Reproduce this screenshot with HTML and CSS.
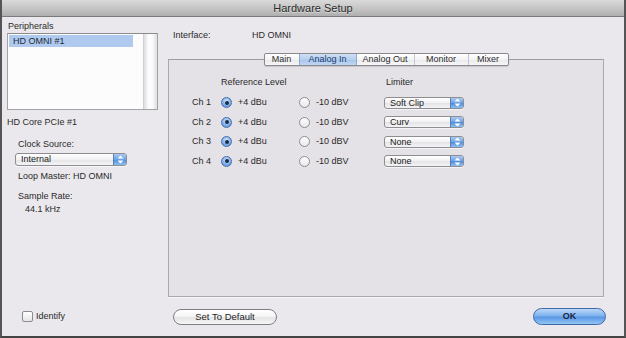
FILE: index.html
```html
<!DOCTYPE html>
<html>
<head>
<meta charset="utf-8">
<link rel="stylesheet" href="styles.css">
</head>
<body>
<div class="window">
  <div class="titlebar">Hardware Setup</div>
  <div class="body">
    <aside class="sidebar">
      <div class="label peripherals">Peripherals</div>
      <div class="listbox">
        <div class="list-items">
          <div class="list-item selected">HD OMNI #1</div>
        </div>
        <div class="scrolltrack"></div>
      </div>
      <div class="label core">HD Core PCIe #1</div>
      <div class="clock">
        <div class="label clock-label">Clock Source:</div>
        <div class="popup clock-popup">
          <span class="popup-text">Internal</span>
          <span class="stepper"><svg width="7" height="9" viewBox="0 0 7 9"><path d="M3.5 0.5 L6.5 3.5 L0.5 3.5 Z M3.5 8.5 L6.5 5.5 L0.5 5.5 Z" fill="#fff"/></svg></span>
        </div>
        <div class="label loop">Loop Master: HD OMNI</div>
        <div class="label rate-label">Sample Rate:</div>
        <div class="label rate">44.1 kHz</div>
      </div>
    </aside>
    <main class="panel">
      <div class="interface"><span class="iface-label">Interface:</span><span>HD OMNI</span></div>
      <div class="tabbox">
        <div class="tabs">
          <div class="tab t-main">Main</div>
          <div class="tab t-in active">Analog In</div>
          <div class="tab t-out">Analog Out</div>
          <div class="tab t-mon">Monitor</div>
          <div class="tab t-mix">Mixer</div>
        </div>
        <div class="grid">
          <div></div>
          <div class="head">Reference Level</div>
          <div></div>
          <div class="head limiter">Limiter</div>

          <div class="ch">Ch 1</div>
          <div class="opt"><span class="radio on"></span>+4 dBu</div>
          <div class="opt"><span class="radio"></span>-10 dBV</div>
          <div class="popup lim"><span class="popup-text">Soft Clip</span><span class="stepper"><svg width="7" height="9" viewBox="0 0 7 9"><path d="M3.5 0.5 L6.5 3.5 L0.5 3.5 Z M3.5 8.5 L6.5 5.5 L0.5 5.5 Z" fill="#fff"/></svg></span></div>

          <div class="ch">Ch 2</div>
          <div class="opt"><span class="radio on"></span>+4 dBu</div>
          <div class="opt"><span class="radio"></span>-10 dBV</div>
          <div class="popup lim"><span class="popup-text">Curv</span><span class="stepper"><svg width="7" height="9" viewBox="0 0 7 9"><path d="M3.5 0.5 L6.5 3.5 L0.5 3.5 Z M3.5 8.5 L6.5 5.5 L0.5 5.5 Z" fill="#fff"/></svg></span></div>

          <div class="ch">Ch 3</div>
          <div class="opt"><span class="radio on"></span>+4 dBu</div>
          <div class="opt"><span class="radio"></span>-10 dBV</div>
          <div class="popup lim"><span class="popup-text">None</span><span class="stepper"><svg width="7" height="9" viewBox="0 0 7 9"><path d="M3.5 0.5 L6.5 3.5 L0.5 3.5 Z M3.5 8.5 L6.5 5.5 L0.5 5.5 Z" fill="#fff"/></svg></span></div>

          <div class="ch">Ch 4</div>
          <div class="opt"><span class="radio on"></span>+4 dBu</div>
          <div class="opt"><span class="radio"></span>-10 dBV</div>
          <div class="popup lim"><span class="popup-text">None</span><span class="stepper"><svg width="7" height="9" viewBox="0 0 7 9"><path d="M3.5 0.5 L6.5 3.5 L0.5 3.5 Z M3.5 8.5 L6.5 5.5 L0.5 5.5 Z" fill="#fff"/></svg></span></div>
        </div>
      </div>
    </main>
  </div>
  <div class="footer">
    <div class="footer-left">
      <span class="checkbox"></span><span class="label">Identify</span>
    </div>
    <div class="footer-right">
      <div class="btn default-btn">Set To Default</div>
      <div class="btn ok-btn">OK</div>
    </div>
  </div>
</div>
</body>
</html>
```

FILE: styles.css
```css
* { box-sizing: border-box; }
html, body { margin: 0; padding: 0; }
body {
  width: 626px;
  height: 338px;
  overflow: hidden;
  background: #ebe8ed;
  font-family: "Liberation Sans", Arial, sans-serif;
  font-size: 9px;
  color: #2a2a2a;
}
.window {
  width: 626px;
  height: 338px;
  border-left: 2px solid #555;
  border-right: 2px solid #555;
  border-bottom: 2px solid #444;
  background: #ebe8ed;
  display: flex;
  flex-direction: column;
}
.titlebar {
  height: 17px;
  line-height: 16px;
  text-align: center;
  font-size: 11px;
  color: #2a2a2a;
  text-shadow: 0 1px 0 rgba(255,255,255,0.5);
  background: linear-gradient(#dadada, #c2c2c2 60%, #afafaf);
  border-bottom: 1px solid #7a7a7a;
}
.body {
  display: flex;
  flex: 1;
}
.label { line-height: 11px; white-space: nowrap; }

/* Sidebar */
.sidebar {
  width: 166px;
  padding-left: 5px;
  display: flex;
  flex-direction: column;
}
.peripherals { margin-top: 4px; padding-left: 1px; }
.listbox {
  margin-top: 1px;
  width: 151px;
  height: 77px;
  border: 1px solid #a3a3a6;
  border-top-color: #8c8c8f;
  background: #fcfcfd;
  display: flex;
}
.list-items { flex: 1; padding: 1px 0 0 1px; }
.list-item {
  height: 12px;
  line-height: 12px;
  padding-left: 4px;
  width: 124px;
  color: #1f2a3a;
}
.list-item.selected { background: #afcaee; }
.scrolltrack {
  width: 14px;
  background: linear-gradient(90deg, #dcdcdf, #fdfdfd 35%, #fafafa 65%, #dedee1);
  border-left: 1px solid #d0d0d3;
}
.core { margin-top: 7px; }
.clock {
  padding-left: 11px;
  display: flex;
  flex-direction: column;
}
.clock-label { margin-top: 11px; }
.clock-popup {
  margin-top: 3px;
  margin-left: -3px;
  width: 112px;
  height: 13px;
}
.loop { margin-top: 5px; }
.rate-label { margin-top: 9px; }
.rate { margin-top: 2px; padding-left: 7px; }

/* Popup buttons */
.popup {
  display: flex;
  border: 1px solid #8d8d92;
  border-radius: 3px;
  background: linear-gradient(#ffffff, #f1f1f3 50%, #e4e4e7 51%, #f4f4f6);
  overflow: hidden;
  box-shadow: 0 1px 0 rgba(255,255,255,0.6);
}
.popup-text {
  flex: 1;
  padding-left: 5px;
  line-height: 11px;
  color: #222;
  font-size: 9px;
}
.stepper {
  width: 13px;
  display: flex;
  align-items: center;
  justify-content: center;
  background: linear-gradient(#a9cbf3, #6aa2e6 50%, #4c8ad9 51%, #8cc0f4);
  border-left: 1px solid #5b7fb5;
}

/* Right panel */
.panel {
  flex: 1;
  padding-right: 20px;
  display: flex;
  flex-direction: column;
}
.interface {
  margin-top: 13px;
  padding-left: 5px;
  line-height: 11px;
  display: flex;
}
.iface-label { width: 79px; }
.tabbox {
  margin-top: 18px;
  height: 238px;
  border: 1px solid #a9a8ad;
  border-top-color: #9d9ca1;
  background: #e4e1e7;
  display: flex;
  flex-direction: column;
  box-shadow: 0 1px 0 #f7f6f8;
}
.tabs {
  align-self: center;
  margin-top: -7px;
  display: flex;
  height: 13px;
  border: 1px solid #8a8a8e;
  border-radius: 2px;
  background: linear-gradient(#ffffff, #f3f3f4 50%, #e9e9eb 51%, #f7f7f8);
  box-shadow: 0 1px 1px rgba(0,0,0,0.12);
}
.tab {
  line-height: 11px;
  text-align: center;
  color: #2e2e2e;
  border-left: 1px solid #c6c6c9;
}
.tab:first-child { border-left: none; }
.t-main { width: 34px; }
.t-in { width: 57px; }
.t-out { width: 58px; }
.t-mon { width: 54px; }
.t-mix { width: 40px; }
.tab.active {
  background: linear-gradient(#cfe0f6, #b5cdee 50%, #a7c3ea 51%, #c2d7f3);
  color: #1d3e70;
  border-left-color: #8fa8cc;
}
.tab.active + .tab { border-left-color: #8fa8cc; }

.grid {
  margin-top: 11px;
  padding-left: 23px;
  display: grid;
  grid-template-columns: 29px 78px 85px 80px;
  grid-template-rows: 15.75px repeat(4, 19.5px);
  align-items: center;
}
.head { line-height: 11px; align-self: start; }
.limiter { padding-left: 2px; }
.ch { line-height: 11px; }
.opt {
  display: flex;
  align-items: center;
  line-height: 11px;
  white-space: nowrap;
}
.radio {
  width: 11px;
  height: 11px;
  border-radius: 50%;
  border: 1px solid #8e8e92;
  background: linear-gradient(#ffffff, #e8e8ea);
  margin-right: 6px;
  flex: none;
  display: flex;
  align-items: center;
  justify-content: center;
}
.radio.on {
  border-color: #4a6ea6;
  background: radial-gradient(circle at 50% 35%, #d4e6fb, #7fb0ec 55%, #4d87d6);
}
.radio.on::after {
  content: "";
  width: 4px;
  height: 4px;
  border-radius: 50%;
  background: #1a2b48;
}
.lim {
  width: 80px;
  height: 12px;
}
.lim .popup-text { line-height: 10px; }

/* Footer */
.footer {
  display: flex;
  margin-top: 11px;
  height: 17px;
  margin-bottom: 11px;
}
.footer-left {
  width: 166px;
  padding-left: 20px;
  display: flex;
  align-items: center;
}
.checkbox {
  width: 11px;
  height: 11px;
  border: 1px solid #8c8c90;
  border-radius: 2px;
  background: linear-gradient(#ffffff, #e6e6e9);
  margin-right: 3px;
}
.footer-right {
  flex: 1;
  display: flex;
  align-items: center;
  justify-content: space-between;
  padding-left: 5px;
  padding-right: 18px;
}
.btn {
  text-align: center;
  border-radius: 9px;
  color: #1e1e1e;
}
.default-btn {
  width: 104px;
  height: 16px;
  line-height: 14px;
  border: 1px solid #7e7e82;
  background: linear-gradient(#ffffff, #f4f4f5 50%, #e4e4e6 51%, #f6f6f7);
  font-size: 9.5px;
}
.ok-btn {
  width: 73px;
  height: 17px;
  line-height: 15px;
  border: 1px solid #3f6aa8;
  background: linear-gradient(#bcd8f8, #7db2ee 45%, #5a97e4 55%, #93c6f6);
  font-weight: bold;
  font-size: 9px;
  color: #1b2540;
}
```
